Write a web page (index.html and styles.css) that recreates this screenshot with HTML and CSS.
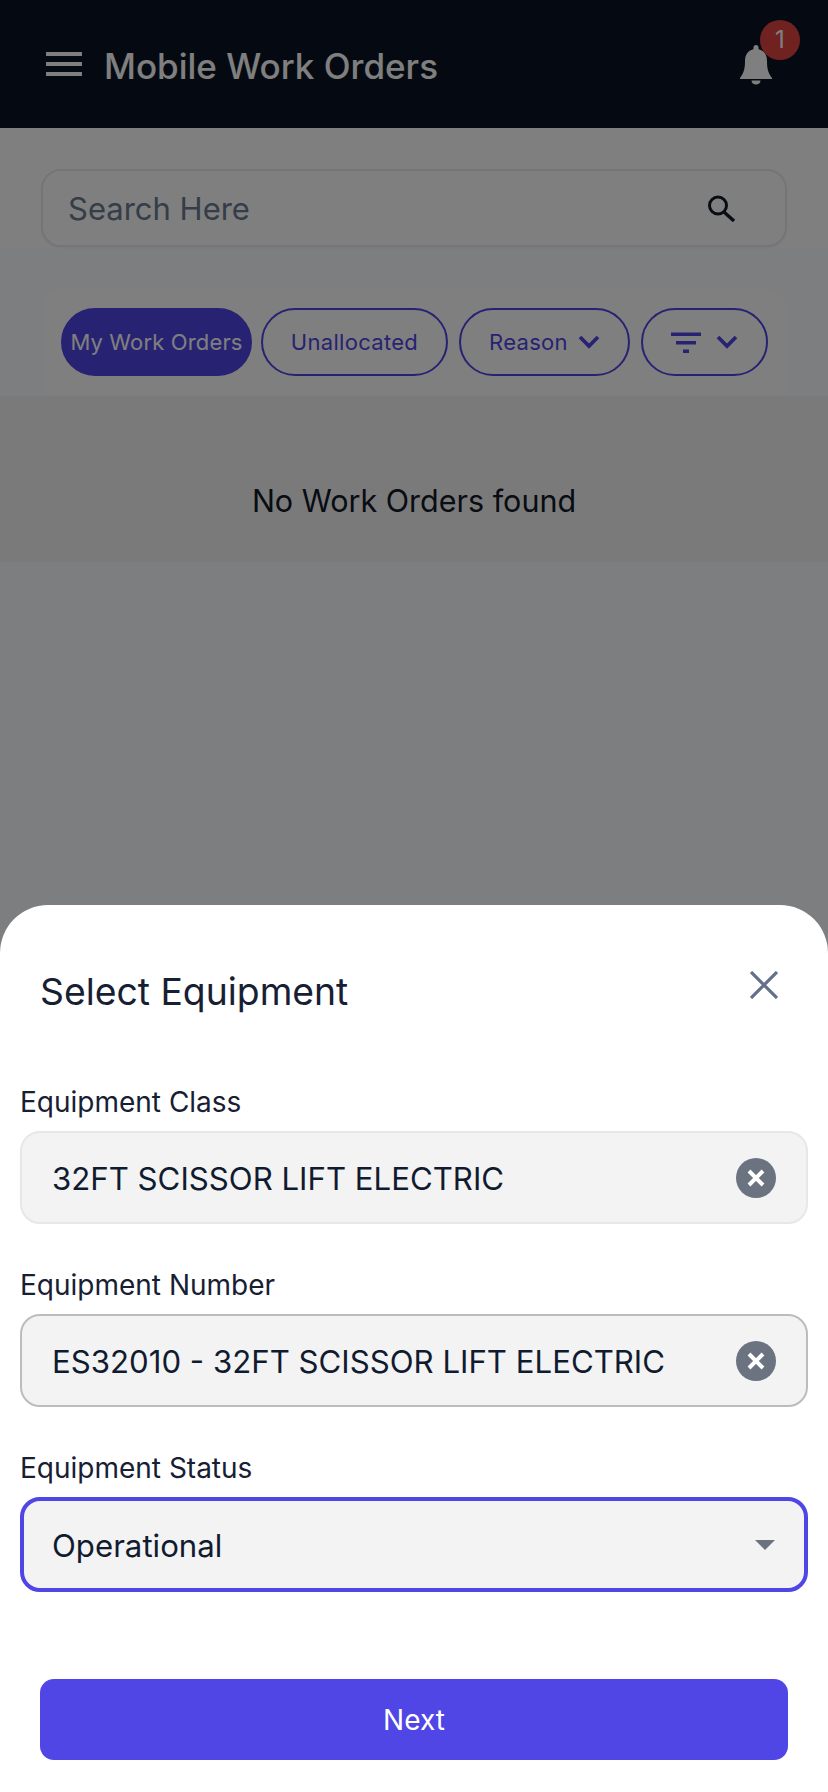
FILE: index.html
```html
<!DOCTYPE html>
<html lang="en">
<head>
<meta charset="utf-8">
<title>Mobile Work Orders</title>
<link rel="stylesheet" href="styles.css">
</head>
<body>
<div class="page">
  <header class="topbar">
    <div class="topbar-left">
      <div class="burger"><span></span><span></span><span></span></div>
      <h1 class="app-title">Mobile Work Orders</h1>
    </div>
    <div class="bell-wrap">
      <svg class="bell" viewBox="0 0 32 40"><path d="M16 0c1.500 0 2.600 1.300 2.600 2.900v1.300C24.200 5.600 27 10 27 16c0 7 .8 11.500 5 17v1H0v-1c4.200-5.500 5-10 5-17 0-6 2.800-10.400 8.400-11.800V2.900C13.400 1.300 14.500 0 16 0zM11.500 35.500h9c0 2.400-2 4-4.500 4s-4.500-1.600-4.500-4z"/></svg>
      <span class="badge">1</span>
    </div>
  </header>
  <section class="search-section">
    <div class="search-box">
      <span class="search-text">Search Here</span>
      <svg class="search-icon" viewBox="0 0 29 27"><circle cx="11" cy="10.500" r="8.500" fill="none" stroke="currentColor" stroke-width="3"/><path d="M17 17l10 9" fill="none" stroke="currentColor" stroke-width="3.400"/></svg>
    </div>
  </section>
  <section class="filter-section">
    <div class="filter-card">
      <button class="pill pill-active">My Work Orders</button>
      <button class="pill pill-unalloc">Unallocated</button>
      <button class="pill pill-reason">Reason
        <svg class="chev" viewBox="0 0 22 14"><path d="M2 2l9 9 9-9" fill="none" stroke="currentColor" stroke-width="3.800"/></svg>
      </button>
      <button class="pill pill-filter">
        <svg class="filter-icon" viewBox="0 0 30 20"><path d="M0 0h30v3.500H0zM5 8.500h20V12H5zM12 17h6v3.500h-6z"/></svg>
        <svg class="chev" viewBox="0 0 22 14"><path d="M2 2l9 9 9-9" fill="none" stroke="currentColor" stroke-width="3.800"/></svg>
      </button>
    </div>
    <div class="empty">No Work Orders found</div>
  </section>
</div>
<div class="overlay"></div>
<aside class="sheet">
  <div class="sheet-head">
    <h2 class="sheet-title">Select Equipment</h2>
    <svg class="close" viewBox="0 0 28 28"><path d="M1 1l26 26M27 1L1 27" fill="none" stroke="currentColor" stroke-width="3.200"/></svg>
  </div>
  <div class="field">
    <label class="field-label">Equipment Class</label>
    <div class="input input-plain">
      <span>32FT SCISSOR LIFT ELECTRIC</span>
      <svg class="clear" viewBox="0 0 40 40"><circle cx="20" cy="20" r="20"/><path d="M13 13l14 14M27 13L13 27"/></svg>
    </div>
  </div>
  <div class="field">
    <label class="field-label">Equipment Number</label>
    <div class="input input-gray">
      <span>ES32010 - 32FT SCISSOR LIFT ELECTRIC</span>
      <svg class="clear" viewBox="0 0 40 40"><circle cx="20" cy="20" r="20"/><path d="M13 13l14 14M27 13L13 27"/></svg>
    </div>
  </div>
  <div class="field">
    <label class="field-label">Equipment Status</label>
    <div class="input input-focus">
      <span>Operational</span>
      <i class="caret"></i>
    </div>
  </div>
  <button class="next">Next</button>
</aside>
</body>
</html>
```
FILE: styles.css
```css
* { box-sizing: border-box; }
html, body { margin: 0; height: 1792px; overflow: hidden; }
body { font-family: Inter, "Liberation Sans", sans-serif; background: #fafcff; color: #111827; position: relative; }
h1, h2 { margin: 0; font-weight: 400; }
button { font-family: inherit; }

.page { height: 1792px; }

.topbar { height: 128px; background: #0b1524; display: flex; justify-content: space-between; padding: 0 28px 0 46px; }
.topbar-left { display: flex; align-items: center; gap: 22px; }
.burger { width: 36px; height: 24px; display: flex; flex-direction: column; justify-content: space-between; }
.burger span { height: 4px; background: #fff; }
.app-title { color: #fff; font-size: 35px; font-weight: 500; line-height: 40px; padding-top: 3px; }
.bell-wrap { position: relative; width: 60px; height: 84px; }
.bell { position: absolute; left: 0; top: 45px; width: 32px; height: 40px; fill: #fff; }
.badge { position: absolute; left: 20px; top: 20px; width: 40px; height: 40px; border-radius: 50%; background: #df4541; color: #fff; font-size: 24px; line-height: 40px; text-align: center; }

.search-section { height: 120px; background: #fff; padding: 41px 41px 0; }
.search-box { height: 78px; border: 2px solid #eaeaf0; border-radius: 20px; background: #fff; display: flex; align-items: center; justify-content: space-between; padding: 0 49px 0 25px; box-shadow: 0 1px 2px rgba(0,0,0,.05); }
.search-text { font-size: 31px; color: #6b7a90; }
.search-icon { width: 29px; height: 27px; color: #111827; }

.filter-section { padding-top: 40px; }
.filter-card { margin: 0 42px; height: 108px; background: #fff; border-radius: 24px 24px 0 0; display: flex; align-items: center; padding: 0 19px; }
.pill { height: 68px; border-radius: 34px; border: 2px solid #4f46e5; background: transparent; color: #4f46e5; font-size: 22px; letter-spacing: .3px; padding: 0; display: flex; align-items: center; justify-content: center; flex: none; }
.pill-active { width: 191px; background: #4f46e5; color: #fff; letter-spacing: .15px; }
.pill-unalloc { width: 187px; margin-left: 9px; }
.pill-reason { width: 171px; margin-left: 11px; gap: 10px; }
.pill-filter { width: 127px; margin-left: 11px; gap: 15px; }
.chev { width: 22px; height: 14px; }
.filter-icon { width: 30px; height: 21px; fill: #4f46e5; }
.empty { height: 166px; background: #f5f5f5; display: flex; align-items: center; justify-content: center; font-size: 30.500px; color: #111827; padding-top: 42px; }

.overlay { position: absolute; inset: 0; background: rgba(0,0,0,.5); }

.sheet { position: absolute; left: 0; right: 0; top: 905px; bottom: 0; background: #fff; border-radius: 48px 48px 0 0; padding: 0 20px; }
.sheet-head { height: 176px; display: flex; justify-content: space-between; padding: 67px 30px 0 20px; }
.sheet-title { font-size: 37.300px; line-height: 40px; color: #172033; }
.close { width: 28px; height: 28px; color: #64708a; margin-top: -1px; }
.field { height: 183px; }
.field-label { display: block; font-size: 28px; line-height: 40px; font-weight: 400; color: #172033; height: 52px; padding-top: 1px; margin: 0 0 -2px; }
.input { height: 93px; width: 788px; border-radius: 20px; background: #f3f3f4; display: flex; align-items: center; justify-content: space-between; padding: 0 30px; font-size: 31.200px; color: #111b30; }
.input span { position: relative; top: 1px; }
.input-plain { border: 2px solid #e5e7eb; }
.input-gray { border: 2px solid #bcbcbc; }
.input-focus { border: 4px solid #4f46e5; height: 95px; padding: 0 29px 0 28px; }
.clear { width: 40px; height: 40px; flex: none; }
.clear circle { fill: #6b7280; }
.clear path { stroke: #fff; stroke-width: 4; fill: none; }
.caret { width: 0; height: 0; border-left: 10px solid transparent; border-right: 10px solid transparent; border-top: 10px solid #6b7280; }
.next { display: block; width: 748px; height: 81px; margin: 49px 0 0 20px; background: #4f46e5; color: #fff; border: 0; border-radius: 14px; font-size: 28px; }
```
